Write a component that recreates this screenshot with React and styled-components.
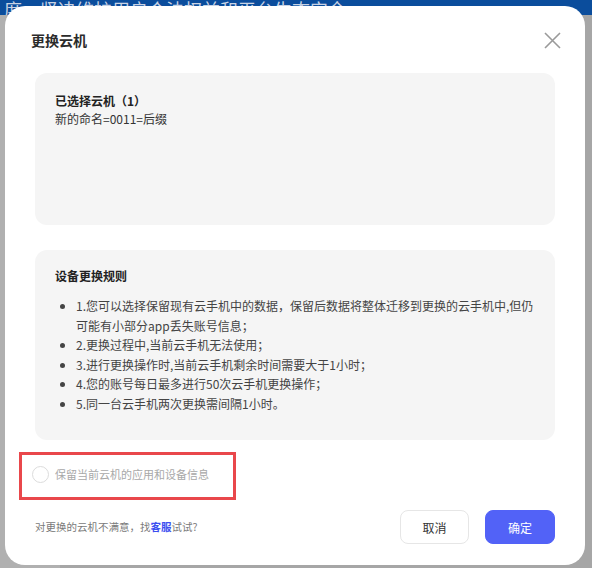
import styled, { createGlobalStyle } from "styled-components";

const GlobalStyle = createGlobalStyle`
  * { box-sizing: border-box; }
  html, body { margin: 0; padding: 0; }
  body {
    font-family: "Noto Sans CJK SC", "Noto Sans", "Liberation Sans", sans-serif;
    background: #a6a6a6;
  }
`;

const rules = [
  "1.您可以选择保留现有云手机中的数据，保留后数据将整体迁移到更换的云手机中,但仍可能有小部分app丢失账号信息；",
  "2.更换过程中,当前云手机无法使用；",
  "3.进行更换操作时,当前云手机剩余时间需要大于1小时；",
  "4.您的账号每日最多进行50次云手机更换操作；",
  "5.同一台云手机两次更换需间隔1小时。",
];

function App() {
  return (
    <>
      <GlobalStyle />
      <Page>
        <Banner>度　坚决维护用户合法权益和平台生态安全</Banner>
        <Body>
          <Side />
        </Body>

        <Modal>
          <Header>
            <Title>更换云机</Title>
            <Close aria-label="close">
              <svg width="17" height="17" viewBox="0 0 17 17">
                <path d="M1 1L16 16M16 1L1 16" stroke="#9a9a9a" strokeWidth="1.6" fill="none" />
              </svg>
            </Close>
          </Header>

          <Card $height={152} $top={19}>
            <CardTitle>已选择云机（1）</CardTitle>
            <CardText>新的命名=0011=后缀</CardText>
          </Card>

          <Card $height={190} $top={17} $gap={25}>
            <CardTitle>设备更换规则</CardTitle>
            <Rules>
              {rules.map((r) => (
                <Rule key={r}>{r}</Rule>
              ))}
            </Rules>
          </Card>

          <KeepBox>
            <Radio />
            <KeepLabel>保留当前云机的应用和设备信息</KeepLabel>
          </KeepBox>

          <Footer>
            <Hint>
              对更换的云机不满意，找<Link>客服</Link>试试?
            </Hint>
            <Buttons>
              <Button>取消</Button>
              <Button $primary>确定</Button>
            </Buttons>
          </Footer>
        </Modal>
      </Page>
    </>
  );
}

const Page = styled.div`
  position: relative;
  width: 592px;
  height: 568px;
  overflow: hidden;
  background: #a6a6a6;
  display: flex;
  flex-direction: column;
`;

const Banner = styled.div`
  height: 15px;
  background: #0b4d9c;
  color: #c9d3e4;
  font-size: 18px;
  line-height: 18px;
  padding-left: 4px;
  white-space: nowrap;
  overflow: hidden;
`;

const Body = styled.div`
  flex: 1;
  display: flex;
`;

const Side = styled.div`
  width: 60px;
  background: #b0b0b0;
`;

const Modal = styled.div`
  position: absolute;
  left: 5px;
  top: 6px;
  width: 580px;
  height: 559px;
  background: #fff;
  border-radius: 20px;
  padding: 0 30px;
  display: flex;
  flex-direction: column;
`;

const Header = styled.div`
  display: flex;
  align-items: center;
  justify-content: space-between;
  height: 28px;
  margin: 20px -6px 0 -4px;
`;

const Title = styled.div`
  font-size: 14px;
  font-weight: 600;
  color: #2b2b2b;
`;

const Close = styled.div`
  display: flex;
  width: 17px;
  height: 17px;
`;

const Card = styled.div`
  margin-top: ${(p) => p.$gap || 19}px;
  height: ${(p) => p.$height}px;
  background: #f5f5f5;
  border-radius: 12px;
  padding: ${(p) => p.$top}px 12px 0 20px;
`;

const CardTitle = styled.div`
  font-size: 12px;
  font-weight: 700;
  line-height: 18px;
  color: #222;
`;

const CardText = styled.div`
  font-size: 12px;
  line-height: 18px;
  color: #333;
`;

const Rules = styled.ul`
  margin: 11px 0 0;
  padding-left: 21px;
`;

const Rule = styled.li`
  font-size: 12px;
  line-height: 19.5px;
  color: #444;
`;

const KeepBox = styled.div`
  margin: 12px 0 0 -16px;
  width: 217px;
  height: 48px;
  border: 3px solid #e9474b;
  display: flex;
  align-items: center;
  padding: 0 0 4px 10px;
  gap: 6px;
`;

const Radio = styled.span`
  width: 17px;
  height: 17px;
  border-radius: 50%;
  border: 1px solid #dcdcdc;
  background: #fff;
`;

const KeepLabel = styled.span`
  font-size: 11px;
  color: #a8a8a8;
`;

const Footer = styled.div`
  margin-top: 10px;
  display: flex;
  align-items: center;
  justify-content: space-between;
`;

const Hint = styled.div`
  font-size: 10.5px;
  color: #7a7a7a;
  padding-bottom: 2px;
`;

const Link = styled.span`
  color: #3c4ff0;
  font-weight: 700;
`;

const Buttons = styled.div`
  display: flex;
  gap: 16px;
`;

const Button = styled.button`
  width: ${(p) => (p.$primary ? 70 : 69)}px;
  height: 34px;
  border-radius: 8px;
  border: 1px solid ${(p) => (p.$primary ? "#5262f7" : "#e6e6e6")};
  background: ${(p) => (p.$primary ? "#5262f7" : "#fff")};
  color: ${(p) => (p.$primary ? "#fff" : "#333")};
  font-family: inherit;
  font-size: 12px;
  padding: 0;
`;

export default App;
